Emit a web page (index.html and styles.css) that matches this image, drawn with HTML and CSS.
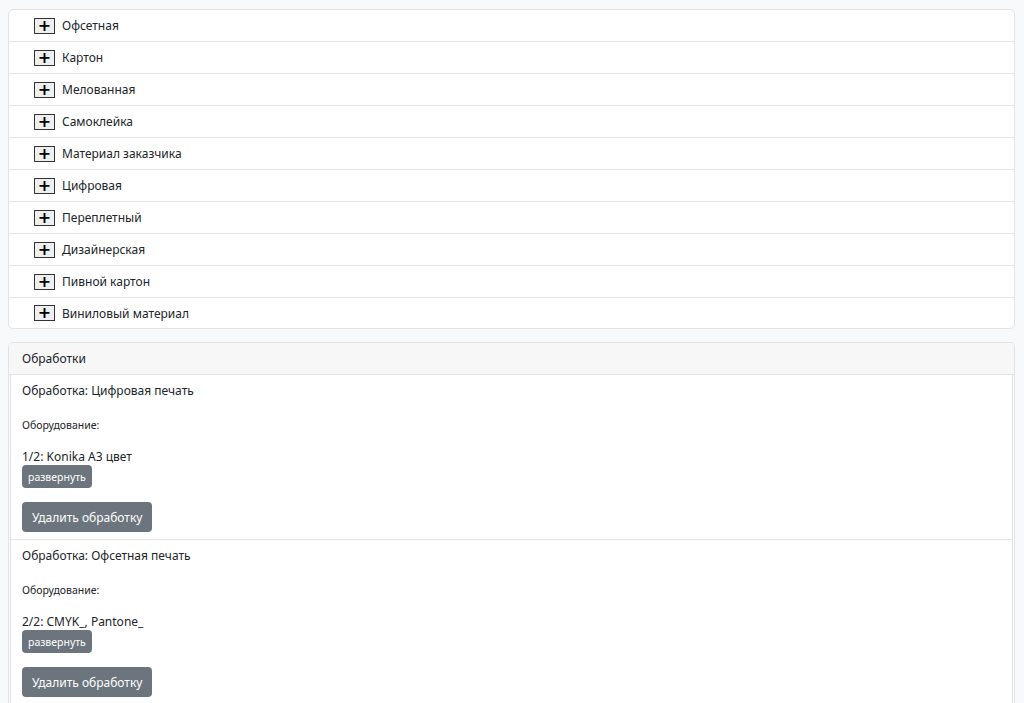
FILE: index.html
```html
<!DOCTYPE html>
<html lang="ru">
<head>
    <meta charset="UTF-8">
    <meta name="viewport" content="width=device-width, initial-scale=1.0">
    <title>Материалы и обработки</title>
    <link rel="stylesheet" href="styles.css">
</head>
<body>
    <div class="card">
        <ul class="list">
            <li class="list-item"><button class="toggle">+</button>Офсетная</li>
            <li class="list-item"><button class="toggle">+</button>Картон</li>
            <li class="list-item"><button class="toggle">+</button>Мелованная</li>
            <li class="list-item"><button class="toggle">+</button>Самоклейка</li>
            <li class="list-item"><button class="toggle">+</button>Материал заказчика</li>
            <li class="list-item"><button class="toggle">+</button>Цифровая</li>
            <li class="list-item"><button class="toggle">+</button>Переплетный</li>
            <li class="list-item"><button class="toggle">+</button>Дизайнерская</li>
            <li class="list-item"><button class="toggle">+</button>Пивной картон</li>
            <li class="list-item"><button class="toggle">+</button>Виниловый материал</li>
        </ul>
    </div>

    <div class="card card-process">
        <div class="card-header">Обработки</div>
        <div class="process-list">
            <div class="process">
                <div class="process-title">Обработка: Цифровая печать</div>
                <div class="process-label">Оборудование:</div>
                <div class="process-equip">1/2: Konika A3 цвет</div>
                <button class="btn btn-sm">развернуть</button>
                <button class="btn btn-delete">Удалить обработку</button>
            </div>
            <div class="process">
                <div class="process-title">Обработка: Офсетная печать</div>
                <div class="process-label">Оборудование:</div>
                <div class="process-equip">2/2: CMYK_, Pantone_</div>
                <button class="btn btn-sm">развернуть</button>
                <button class="btn btn-delete">Удалить обработку</button>
            </div>
        </div>
    </div>
</body>
</html>
```

FILE: styles.css
```css
* {
    margin: 0;
    padding: 0;
    box-sizing: border-box;
}

body {
    background-color: #f8f9fa;
    color: #212529;
    font-family: 'Noto Sans', sans-serif;
    font-size: 12px;
    padding: 9px 9px 0 8px;
}

.card {
    background-color: #fff;
    border: 1px solid #e2e3e5;
    border-radius: 5px;
    overflow: hidden;
}

.list {
    list-style: none;
}

.list-item {
    display: flex;
    align-items: center;
    height: 32px;
    padding-left: 25px;
    border-bottom: 1px solid #e4e5e7;
}

.list-item:last-child {
    height: 30px;
    border-bottom: none;
}

.toggle {
    width: 21px;
    height: 16px;
    margin-right: 7px;
    background-color: #efefef;
    border: 1px solid #333;
    color: #000;
    font-family: 'DejaVu Sans', sans-serif;
    font-size: 16px;
    line-height: 12px;
    font-weight: bold;
}

.card-process {
    margin-top: 13px;
    border-bottom: none;
    border-radius: 5px 5px 0 0;
}

.card-header {
    height: 32px;
    display: flex;
    align-items: center;
    padding-left: 13px;
    background-color: #f7f7f7;
    border-bottom: 1px solid #e2e3e5;
}

.process-list {
    margin: 0 1px;
    border-left: 1px solid #dfe0e2;
    border-right: 1px solid #dfe0e2;
}

.process {
    padding: 7px 11px 7px 11px;
    border-bottom: 1px solid #e4e5e7;
}

.process-title {
    line-height: 18px;
}

.process-label {
    font-size: 10.5px;
    margin-top: 17px;
    line-height: 16px;
}

.process-equip {
    margin-top: 16px;
    line-height: 16px;
}

.btn {
    display: block;
    background-color: #6c757d;
    color: #fff;
    border: none;
    border-radius: 4px;
    font-family: 'Noto Sans', sans-serif;
}

.btn-sm {
    height: 23px;
    padding: 0 6px;
    font-size: 10.5px;
}

.btn-delete {
    margin-top: 14px;
    height: 30px;
    padding: 0 10px;
    font-size: 12px;
}
```
